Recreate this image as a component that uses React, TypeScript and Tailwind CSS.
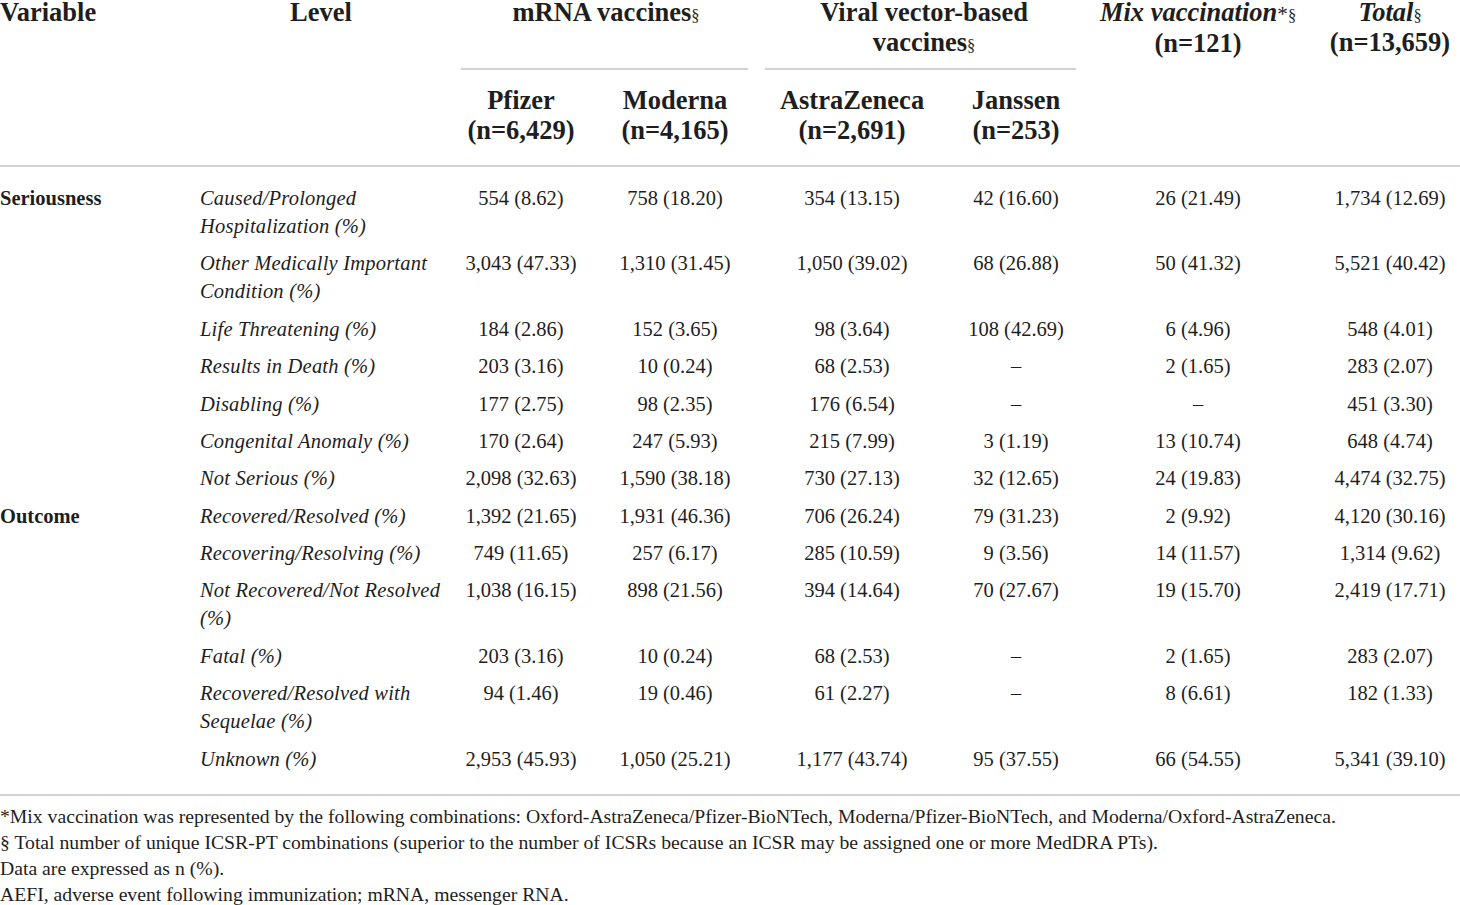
import React from "react";

type Row = { v?: string; level: React.ReactNode; cells: string[]; first?: boolean; last?: boolean };

const rows: Row[] = [
  { v: "Seriousness", level: <>Caused/Prolonged<br />Hospitalization (%)</>, cells: ["554 (8.62)", "758 (18.20)", "354 (13.15)", "42 (16.60)", "26 (21.49)", "1,734 (12.69)"], first: true },
  { level: <>Other Medically Important<br />Condition (%)</>, cells: ["3,043 (47.33)", "1,310 (31.45)", "1,050 (39.02)", "68 (26.88)", "50 (41.32)", "5,521 (40.42)"] },
  { level: "Life Threatening (%)", cells: ["184 (2.86)", "152 (3.65)", "98 (3.64)", "108 (42.69)", "6 (4.96)", "548 (4.01)"] },
  { level: "Results in Death (%)", cells: ["203 (3.16)", "10 (0.24)", "68 (2.53)", "–", "2 (1.65)", "283 (2.07)"] },
  { level: "Disabling (%)", cells: ["177 (2.75)", "98 (2.35)", "176 (6.54)", "–", "–", "451 (3.30)"] },
  { level: "Congenital Anomaly (%)", cells: ["170 (2.64)", "247 (5.93)", "215 (7.99)", "3 (1.19)", "13 (10.74)", "648 (4.74)"] },
  { level: "Not Serious (%)", cells: ["2,098 (32.63)", "1,590 (38.18)", "730 (27.13)", "32 (12.65)", "24 (19.83)", "4,474 (32.75)"] },
  { v: "Outcome", level: "Recovered/Resolved (%)", cells: ["1,392 (21.65)", "1,931 (46.36)", "706 (26.24)", "79 (31.23)", "2 (9.92)", "4,120 (30.16)"] },
  { level: "Recovering/Resolving (%)", cells: ["749 (11.65)", "257 (6.17)", "285 (10.59)", "9 (3.56)", "14 (11.57)", "1,314 (9.62)"] },
  { level: <>Not Recovered/Not Resolved<br />(%)</>, cells: ["1,038 (16.15)", "898 (21.56)", "394 (14.64)", "70 (27.67)", "19 (15.70)", "2,419 (17.71)"] },
  { level: "Fatal (%)", cells: ["203 (3.16)", "10 (0.24)", "68 (2.53)", "–", "2 (1.65)", "283 (2.07)"] },
  { level: <>Recovered/Resolved with<br />Sequelae (%)</>, cells: ["94 (1.46)", "19 (0.46)", "61 (2.27)", "–", "8 (6.61)", "182 (1.33)"] },
  { level: "Unknown (%)", cells: ["2,953 (45.93)", "1,050 (25.21)", "1,177 (43.74)", "95 (37.55)", "66 (54.55)", "5,341 (39.10)"], last: true },
];

const Sect = () => <span className="text-[0.62em] font-normal leading-none">§</span>;

function Lines({ a, b }: { a: React.ReactNode; b?: React.ReactNode }) {
  return (
    <>
      <div className="leading-[24px]">{a}</div>
      {b ? <div className="leading-[24px] mt-[6px]">{b}</div> : null}
    </>
  );
}

export default function App() {
  const serif = { fontFamily: '"Liberation Serif", "DejaVu Serif", serif' };
  return (
    <div className="w-[1460px] h-[905px] overflow-hidden bg-white text-[#1e1e1e]" style={serif}>
      <table className="table-fixed border-collapse w-[1460px]">
        <colgroup>
          <col className="w-[190px]" />
          <col className="w-[262px]" />
          <col className="w-[138px]" />
          <col className="w-[170px]" />
          <col className="w-[184px]" />
          <col className="w-[144px]" />
          <col className="w-[220px]" />
          <col className="w-[152px]" />
        </colgroup>
        <thead className="text-[26.5px] leading-[30px] font-bold">
          <tr>
            <th rowSpan={2} className="align-top text-left font-bold p-0 border-b-2 border-[#d2d2d2]">
              <Lines a="Variable" />
            </th>
            <th rowSpan={2} className="align-top text-center font-bold p-0 border-b-2 border-[#d2d2d2]">
              <Lines a="Level" />
            </th>
            <th colSpan={2} className="align-top text-center font-bold p-0 pb-[15px]">
              <div className="h-[54px]">
                <Lines a={<>mRNA vaccines<Sect /></>} />
              </div>
              <div className="mt-[14px] h-[2px] bg-[#d2d2d2] ml-[9px] mr-[12px]" />
            </th>
            <th colSpan={2} className="align-top text-center font-bold p-0 pb-[15px]">
              <div className="h-[54px]">
                <Lines a="Viral vector-based" b={<>vaccines<Sect /></>} />
              </div>
              <div className="mt-[14px] h-[2px] bg-[#d2d2d2] ml-[5px] mr-[12px]" />
            </th>
            <th rowSpan={2} className="align-top text-center font-bold p-0 border-b-2 border-[#d2d2d2]">
              <Lines
                a={<><i>Mix vaccination</i><span className="text-[0.8em] font-normal leading-none">*</span><Sect /></>}
                b="(n=121)"
              />
            </th>
            <th rowSpan={2} className="align-top text-center font-bold p-0 pl-[12px] border-b-2 border-[#d2d2d2]">
              <Lines a={<><i>Total</i><Sect /></>} b="(n=13,659)" />
            </th>
          </tr>
          <tr>
            <th className="align-top text-center font-bold p-0 pb-[20px] border-b-2 border-[#d2d2d2]">Pfizer<br />(n=6,429)</th>
            <th className="align-top text-center font-bold p-0 pb-[20px] border-b-2 border-[#d2d2d2]">Moderna<br />(n=4,165)</th>
            <th className="align-top text-center font-bold p-0 pb-[20px] border-b-2 border-[#d2d2d2]">AstraZeneca<br />(n=2,691)</th>
            <th className="align-top text-center font-bold p-0 pb-[20px] border-b-2 border-[#d2d2d2]">Janssen<br />(n=253)</th>
          </tr>
        </thead>
        <tbody className="text-[20.5px] leading-[28px]">
          {rows.map((r, i) => {
            const pad = r.first ? "pt-[17px] pb-[4.7px]" : r.last ? "pt-[4.7px] pb-[21px] border-b-2 border-[#d2d2d2]" : "py-[4.7px]";
            return (
              <tr key={i}>
                <td className={`align-top text-left font-bold px-0 ${pad}`}>{r.v ?? ""}</td>
                <td className={`align-top text-left italic tracking-[0.2px] pl-[10px] pr-0 ${pad}`}>{r.level}</td>
                {r.cells.map((c, j) => (
                  <td key={j} className={`align-top text-center px-0 ${j === 5 ? "pl-[12px]" : ""} ${pad}`}>{c}</td>
                ))}
              </tr>
            );
          })}
        </tbody>
      </table>
      <div className="mt-[7px] text-[19.7px] leading-[26px]">
        <p>*Mix vaccination was represented by the following combinations: Oxford-AstraZeneca/Pfizer-BioNTech, Moderna/Pfizer-BioNTech, and Moderna/Oxford-AstraZeneca.</p>
        <p>§ Total number of unique ICSR-PT combinations (superior to the number of ICSRs because an ICSR may be assigned one or more MedDRA PTs).</p>
        <p>Data are expressed as n (%).</p>
        <p>AEFI, adverse event following immunization; mRNA, messenger RNA.</p>
      </div>
    </div>
  );
}
